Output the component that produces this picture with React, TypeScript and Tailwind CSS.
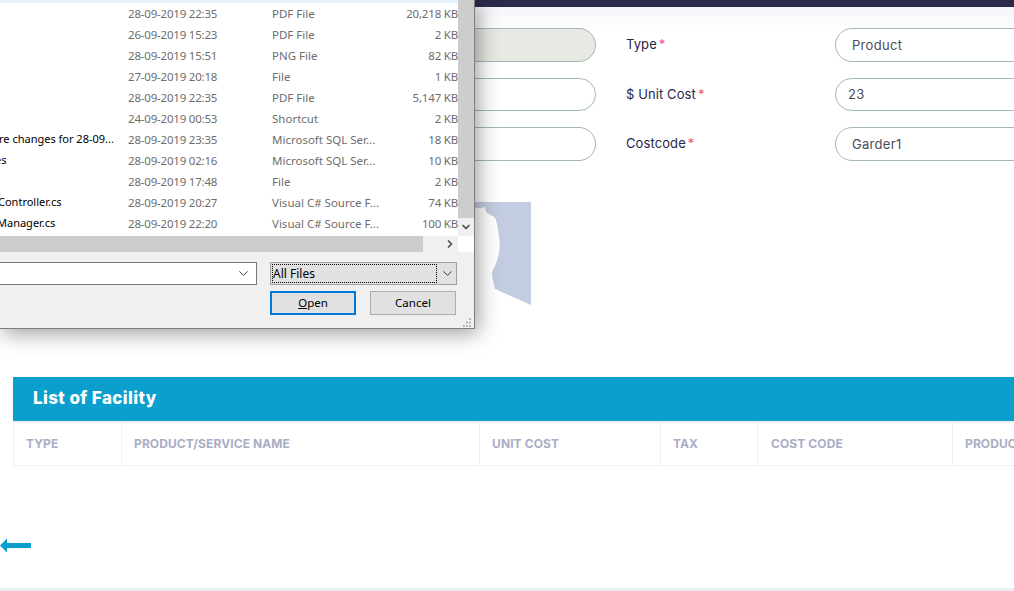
import { ChevronDown, ChevronRight } from "lucide-react";

const files = [
  { date: "28-09-2019 22:35", type: "PDF File", size: "20,218 KB" },
  { date: "26-09-2019 15:23", type: "PDF File", size: "2 KB" },
  { date: "28-09-2019 15:51", type: "PNG File", size: "82 KB" },
  { date: "27-09-2019 20:18", type: "File", size: "1 KB" },
  { date: "28-09-2019 22:35", type: "PDF File", size: "5,147 KB" },
  { date: "24-09-2019 00:53", type: "Shortcut", size: "2 KB" },
  { name: "re changes for 28-09...", nameClass: "ml-[-1px]", date: "28-09-2019 23:35", type: "Microsoft SQL Ser...", size: "18 KB" },
  { name: "es", nameClass: "ml-[-5px]", date: "28-09-2019 02:16", type: "Microsoft SQL Ser...", size: "10 KB" },
  { date: "28-09-2019 17:48", type: "File", size: "2 KB" },
  { name: "Controller.cs", nameClass: "ml-[-2px]", date: "28-09-2019 20:27", type: "Visual C# Source F...", size: "74 KB" },
  { name: "Manager.cs", nameClass: "ml-[-3px]", date: "28-09-2019 22:20", type: "Visual C# Source F...", size: "100 KB" },
];

const columns = [
  { label: "TYPE", width: "w-[108px]", pad: "pl-[12px]" },
  { label: "PRODUCT/SERVICE NAME", width: "w-[358px]", pad: "pl-[12px]" },
  { label: "UNIT COST", width: "w-[181px]", pad: "pl-[12px]" },
  { label: "TAX", width: "w-[97px]", pad: "pl-[12px]" },
  { label: "COST CODE", width: "w-[195px]", pad: "pl-[13px]" },
  { label: "PRODUCT DESCRIPTION", width: "w-[200px]", pad: "pl-[12px]" },
];

const rows = [
  { label: "Type", value: "Product", height: "h-[34px]", gap: "mt-0", disabled: true, pad: "pl-[16px] pt-[1px]" },
  { label: "$ Unit Cost", value: "23", height: "h-[33px]", gap: "mt-[16px]", disabled: false, pad: "pl-[12px]" },
  { label: "Costcode", value: "Garder1", height: "h-[34px]", gap: "mt-[16px]", disabled: false, pad: "pl-[16px] pt-[1px]" },
];

function FileDialog() {
  return (
    <div className="absolute left-0 top-0 z-10 flex h-[329px] w-[475px] flex-col border-r border-b border-[#7f7f7f] bg-[#f0f0f0] font-['Noto_Sans',sans-serif] text-[11.5px] shadow-[3px_4px_20px_rgba(0,0,0,0.4)]">
      <div className="flex h-[252px]">
        <div className="flex w-[458px] flex-col">
          <div className="h-[236px] bg-white">
            <div className="h-[3px] bg-[#e5f3ff]" />
            {files.map((f, i) => (
              <div key={i} className="flex h-[21px] items-center whitespace-nowrap text-[#6d6d6d]">
                <div className="w-[128px] shrink-0 overflow-hidden text-[11px] text-black">
                  <div className={f.nameClass}>{f.name}</div>
                </div>
                <div className="w-[144px] shrink-0 tracking-[-0.2px]">{f.date}</div>
                <div className="w-[110px] shrink-0">{f.type}</div>
                <div className="w-[76px] shrink-0 text-right tracking-[-0.2px]">{f.size}</div>
              </div>
            ))}
          </div>
          <div className="flex h-[16px] items-center bg-[#f0f0f0]">
            <div className="h-full w-[423px] bg-[#cdcdcd]" />
            <div className="flex flex-1 justify-center pl-[18px]">
              <ChevronRight size={12} strokeWidth={3.5} className="text-[#505050]" />
            </div>
          </div>
        </div>
        <div className="flex w-[16px] flex-col">
          <div className="h-[218px] bg-[#cdcdcd]" />
          <div className="flex h-[18px] items-center justify-center bg-[#f0f0f0]">
            <ChevronDown size={12} strokeWidth={3.5} className="text-[#505050]" />
          </div>
          <div className="h-[16px] bg-white" />
        </div>
      </div>
      <div className="mt-[10px] flex items-start">
        <div className="ml-[-2px] flex h-[23px] w-[259px] items-center justify-end border border-[#7a7a7a] bg-white pr-[5px]">
          <ChevronDown size={15} strokeWidth={1.5} className="text-[#303030]" />
        </div>
        <div className="ml-[13px] flex h-[23px] w-[187px] items-center border border-[#a0a0a0] bg-[#e1e1e1]">
          <div className="ml-[1px] flex h-[19px] w-[165px] items-center border border-dotted border-black text-[12px] leading-none text-black">
            All Files
          </div>
          <ChevronDown size={15} strokeWidth={1.5} className="ml-[3px] text-[#303030]" />
        </div>
      </div>
      <div className="relative mt-[6px] flex pl-[270px] text-black">
        <button className="flex h-[24px] w-[86px] items-center justify-center border-2 border-[#0078d7] bg-[#e1e1e1]">
          <span><span className="underline">O</span>pen</span>
        </button>
        <button className="ml-[14px] flex h-[24px] w-[86px] items-center justify-center border border-[#adadad] bg-[#e1e1e1]">
          Cancel
        </button>
        <svg className="absolute right-[2px] top-[27px]" width="10" height="10" viewBox="0 0 10 10">
          <path d="M7 0h2v2H7zM4 3.5h2v2H4zM7 3.5h2v2H7zM1 7h2v2H1zM4 7h2v2H4zM7 7h2v2H7z" fill="#b5b5b5" />
        </svg>
      </div>
    </div>
  );
}

export default function App() {
  return (
    <div className="relative flex h-[591px] w-[1014px] flex-col overflow-hidden bg-white font-['Inter',sans-serif]">
      <FileDialog />
      <div className="h-[7px] shrink-0 bg-[#2b2a4c]" />
      <div className="bg-gradient-to-b from-[#f6f6fa] to-white to-[16%] pt-[21px]">
        {rows.map((r) => (
          <div key={r.label} className={`flex items-center ${r.gap}`}>
            <div className={`ml-[300px] w-[296px] shrink-0 rounded-full border border-[#a3b8b4] ${r.height} ${r.disabled ? "bg-[#e9e9e3]" : "bg-white"}`} />
            <div className="ml-[30px] w-[209px] shrink-0 text-[13px] tracking-[0.1px] text-[#26264a]">
              {r.label}
              <span className="ml-[2px] text-[#f0567c]">*</span>
            </div>
            <div className={`flex w-[300px] shrink-0 items-center rounded-full border border-[#a3b8b4] text-[13px] tracking-[0.3px] text-[#4c4c5c] ${r.height} ${r.pad}`}>
              {r.value}
            </div>
          </div>
        ))}
      </div>

      <div className="ml-[440px] mt-[41px] h-[103px] w-[91px] shrink-0">
        <svg width="91" height="103" viewBox="0 0 91 103">
          <path d="M0 0H91V103L55 87C53 80 52 75 52 70C55 64 57 60 58 55C60 48 60 40 59 35C58 26 57 20 55 16C52 13 48 12 46 10L45 5C42 6 38 6 35 6L0 3Z" fill="#c3cce0" />
        </svg>
      </div>

      <div className="ml-[13px] mt-[72px] w-[1100px] shrink-0">
        <div className="flex h-[44px] items-center bg-[#0a9fcd] pl-[20px] text-[17px] font-extrabold tracking-[0.4px] text-white">
          List of Facility
        </div>
        <div className="flex h-[45px] border-t-2 border-b border-l border-[#f1f1f4]">
          {columns.map((c) => (
            <div
              key={c.label}
              className={`flex shrink-0 items-center border-r border-[#f1f1f4] text-[12px] font-bold tracking-[0.1px] whitespace-nowrap text-[#a9adc5] ${c.width} ${c.pad}`}
            >
              {c.label}
            </div>
          ))}
        </div>
      </div>

      <div className="mt-[72px] h-[15px] w-[31px] shrink-0">
        <svg width="31" height="15" viewBox="0 0 31 15">
          <path d="M0 7.5L7 0.5V5H31V10H7V14.5Z" fill="#0a9fcd" />
        </svg>
      </div>

      <div className="mt-auto h-[3px] shrink-0 bg-[#ededf4]" />
    </div>
  );
}
